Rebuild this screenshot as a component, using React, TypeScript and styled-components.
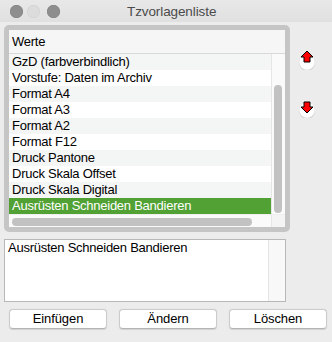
import * as React from "react"
import styled, { createGlobalStyle } from "styled-components"

const GlobalStyle = createGlobalStyle`
  html, body {
    margin: 0;
    padding: 0;
    background: #ececec;
  }
  body {
    font-family: "Liberation Sans", Arial, sans-serif;
    font-size: 13px;
    color: #000;
  }
`

const items = [
  "GzD (farbverbindlich)",
  "Vorstufe: Daten im Archiv",
  "Format A4",
  "Format A3",
  "Format A2",
  "Format F12",
  "Druck Pantone",
  "Druck Skala Offset",
  "Druck Skala Digital",
  "Ausrüsten Schneiden Bandieren",
]

const Window = styled.div`
  width: 332px;
  height: 342px;
  background: #ececec;
  display: flex;
  flex-direction: column;
  overflow: hidden;
`

const TitleBar = styled.div`
  height: 22px;
  flex: none;
  display: flex;
  align-items: center;
  background: linear-gradient(#e8e8e8, #e0e0e0);
`

const Lights = styled.div`
  display: flex;
  align-items: center;
  margin-left: 10px;
`

const Light = styled.span<{ $dim?: boolean; $gap: number }>`
  width: 13px;
  height: 13px;
  border-radius: 50%;
  margin-left: ${p => p.$gap}px;
  background: ${p => (p.$dim ? "#dcdcdc" : "#8e8e8e")};
  box-shadow: inset 0 0 0 0.5px ${p => (p.$dim ? "#cfcfcf" : "#7d7d7d")};
`

const Title = styled.div`
  margin-left: 67px;
  color: #4b4b4b;
  font-size: 13.5px;
  letter-spacing: -0.1px;
`

const Body = styled.div`
  display: flex;
  align-items: flex-start;
`

const LeftColumn = styled.div`
  width: 290px;
  display: flex;
  flex-direction: column;
`

const ListFrame = styled.div`
  margin: 3px 0 0 4px;
  width: 286px;
  box-sizing: border-box;
  border: 5px solid #c5c5c5;
  border-radius: 5px;
  background: #fff;
  display: grid;
  grid-template-columns: 262px 14px;
  grid-template-rows: 24px 160px 13px;
`

const Header = styled.div`
  grid-column: 1 / span 2;
  box-sizing: border-box;
  border-bottom: 1px solid #d9d9d9;
  background: #f6f6f6;
  padding-left: 3px;
  line-height: 23px;
  letter-spacing: -0.25px;
`

const Rows = styled.div`
  overflow: hidden;
`

const Row = styled.div<{ $selected?: boolean }>`
  height: 16px;
  line-height: 16px;
  padding-left: 3px;
  white-space: nowrap;
  letter-spacing: -0.25px;
  background: #fff;
  &:nth-child(odd) {
    background: #f4f5f5;
  }
  ${p =>
    p.$selected &&
    `
    &&, &&:nth-child(odd), &&:nth-child(even) {
      background: #52a135;
      color: #fff;
    }
  `}
`

const VTrack = styled.div`
  box-sizing: border-box;
  border-left: 1px solid #e6e6e6;
  background: #fafafa;
  padding: 31px 0 0 2px;
`

const VThumb = styled.div`
  width: 8px;
  height: 128px;
  border-radius: 4px;
  background: #c2c2c2;
`

const HTrack = styled.div`
  background: #fafafa;
  border-top: 1px solid #efefef;
  padding: 3px 0 0 3px;
  box-sizing: border-box;
`

const HThumb = styled.div`
  width: 240px;
  height: 8px;
  border-radius: 4px;
  background: #c2c2c2;
`

const Corner = styled.div`
  background: #f4f4f4;
  border-left: 1px solid #e6e6e6;
  border-top: 1px solid #efefef;
`

const TextBox = styled.div`
  margin: 7px 4px 0 4px;
  height: 63px;
  box-sizing: border-box;
  border: 1px solid #b8b8b8;
  background: #fff;
  display: flex;
`

const TextContent = styled.div`
  flex: 1;
  padding: 0 3px;
  line-height: 16px;
  letter-spacing: -0.25px;
`

const TextScroll = styled.div`
  width: 16px;
  background: #f8f8f8;
  border-left: 1px solid #e4e4e4;
`

const SideColumn = styled.div`
  display: flex;
  flex-direction: column;
  gap: 28px;
  padding: 28px 0 0 8px;
`

const RoundButton = styled.div`
  width: 18px;
  height: 20px;
  svg {
    display: block;
  }
`

const ButtonRow = styled.div`
  display: flex;
  gap: 12px;
  padding-left: 9px;
  margin-top: 7px;
`

const Button = styled.div`
  width: 98px;
  height: 20px;
  box-sizing: border-box;
  border: 1px solid #cbcbcb;
  border-bottom-color: #b4b4b4;
  border-radius: 4px;
  background: #fff;
  box-shadow: 0 0.5px 1px rgba(0, 0, 0, 0.12);
  text-align: center;
  line-height: 18px;
  letter-spacing: -0.1px;
`

function Arrow({ down }: { down?: boolean }) {
  const points = down
    ? "6,4 12,4 12,9 15,9 9,15 3,9 6,9"
    : "9,1 15,7 12,7 12,12 6,12 6,7 3,7"
  return (
    <svg width="18" height="20" viewBox="0 0 18 20">
      <circle cx="9" cy="12.8" r="8" fill="#c9c9c9" />
      <circle cx="9" cy="12" r="8" fill="#ffffff" stroke="#dadada" strokeWidth="0.5" />
      <polygon points={points} fill="#ff0000" stroke="#000" strokeWidth="1" strokeLinejoin="miter" />
    </svg>
  )
}

export default function App() {
  return (
    <>
      <GlobalStyle />
      <Window>
        <TitleBar>
          <Lights>
            <Light $gap={0} />
            <Light $dim $gap={4} />
            <Light $gap={7} />
          </Lights>
          <Title>Tzvorlagenliste</Title>
        </TitleBar>
        <Body>
          <LeftColumn>
            <ListFrame>
              <Header>Werte</Header>
              <Rows>
                {items.map((item, i) => (
                  <Row key={item} $selected={i === items.length - 1}>
                    {item}
                  </Row>
                ))}
              </Rows>
              <VTrack>
                <VThumb />
              </VTrack>
              <HTrack>
                <HThumb />
              </HTrack>
              <Corner />
            </ListFrame>
            <TextBox>
              <TextContent>Ausrüsten Schneiden Bandieren</TextContent>
              <TextScroll />
            </TextBox>
          </LeftColumn>
          <SideColumn>
            <RoundButton>
              <Arrow />
            </RoundButton>
            <RoundButton>
              <Arrow down />
            </RoundButton>
          </SideColumn>
        </Body>
        <ButtonRow>
          <Button>Einfügen</Button>
          <Button>Ändern</Button>
          <Button>Löschen</Button>
        </ButtonRow>
      </Window>
    </>
  )
}
